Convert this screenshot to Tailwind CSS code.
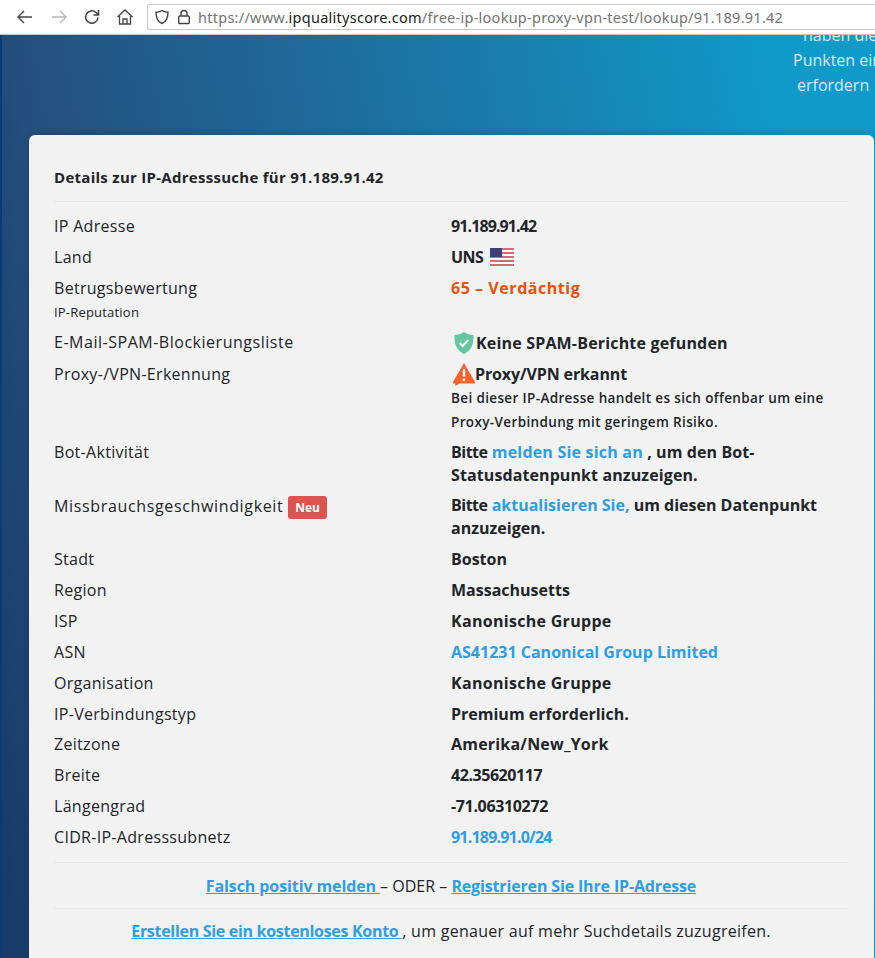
<!DOCTYPE html>
<html lang="en">
<head>
  <meta charset="UTF-8">
  <title>IP Lookup</title>
  <script src="https://cdn.jsdelivr.net/npm/@tailwindcss/browser@4"></script>
</head>
<body class="h-[958px] w-[875px] overflow-hidden bg-[#0c3a74] font-['Open_Sans',sans-serif] text-[16px] leading-6 text-[#212529]">

  <!-- Browser toolbar -->
  <div class="flex h-[35px] items-center border-b border-[#c8c8c8] bg-white">
    <svg class="ml-[16px] h-[18px] w-[18px]" viewBox="0 0 18 18" fill="none" stroke="#444" stroke-width="1.4"><path d="M16 9H2M8 3L2 9l6 6"/></svg>
    <svg class="ml-[16px] h-[18px] w-[18px]" viewBox="0 0 18 18" fill="none" stroke="#b5b5b5" stroke-width="1.4"><path d="M2 9h14M10 3l6 6-6 6"/></svg>
    <svg class="ml-[15px] h-[18px] w-[18px]" viewBox="0 0 18 18" fill="none" stroke="#444" stroke-width="1.5"><path d="M15 9.500A6.200 6.200 0 1 1 13 4.500L15 6.500M15.500 2v5h-5"/></svg>
    <svg class="ml-[15px] h-[18px] w-[18px]" viewBox="0 0 18 18" fill="none" stroke="#444" stroke-width="1.3"><path d="M1.500 9L9 2l7.500 7M3.500 8v8h11V8M7 16v-5h4v5"/></svg>
    <div class="ml-[13px] flex h-[26px] flex-1 items-center rounded-l-[3px] border border-r-0 border-[#c8c8c8] font-['Noto_Sans',sans-serif] text-[14.5px] tracking-[0.26px] text-[#737373]">
      <svg class="ml-[6px] h-[16px] w-[16px]" viewBox="0 0 16 16" fill="none" stroke="#444" stroke-width="1.4"><path d="M8 1.500c2 1.300 4 1.800 6 1.800 0 5-1 9.200-6 11.200-5-2-6-6.200-6-11.200 2 0 4-.5 6-1.800z"/></svg>
      <svg class="ml-[6px] h-[16px] w-[16px]" viewBox="0 0 16 16" fill="none" stroke="#444" stroke-width="1.4"><rect x="2.700" y="7" width="10.600" height="7.500" rx="1"/><path d="M5 7V4.500a3 3 0 0 1 6 0V7"/></svg>
      <span class="ml-[6px] whitespace-nowrap">https://www.<span class="text-[#1a1a1a]">ipqualityscore.com</span>/free-ip-lookup-proxy-vpn-test/lookup/91.189.91.42</span>
    </div>
  </div>

  <!-- Hero -->
  <div class="ml-[2px] h-[923px] overflow-hidden bg-[linear-gradient(80deg,#173a68_0%,#24507f_18%,#1b78a8_58%,#0f9ac9_90%)]">
    <div class="flex h-[100px] flex-col items-end text-[16px] leading-[25px] text-white/80">
      <p class="-mt-[12px] w-[72px] whitespace-nowrap">haben die</p>
      <p class="w-[82px] whitespace-nowrap">Punkten ein</p>
      <p class="w-[78px] whitespace-nowrap">erfordern</p>
    </div>

    <!-- Details card -->
    <div class="ml-[27px] mr-[1px] rounded-t-[6px] bg-[#f2f2f2] pb-[30px] pl-[25px] pr-[26px] pt-[30px] shadow-[0_-2px_6px_rgba(0,0,0,0.15)]">
      <h2 class="border-b border-[#e6e6e6] pb-[12px] text-[15px] font-bold leading-6 tracking-[0.28px]">Details zur IP-Adresssuche für 91.189.91.42</h2>

      <div class="grid grid-cols-[397px_1fr] pt-[9px] tracking-[0.3px]">
        <div class="py-[3.440px]">IP Adresse</div>
        <div class="py-[3.440px] font-bold tracking-[-0.9px]">91.189.91.42</div>

        <div class="py-[3.440px]">Land</div>
        <div class="flex items-center py-[3.440px] font-bold tracking-[-0.5px]">UNS
          <svg class="ml-[7px] h-[18px] w-[24px]" viewBox="0 0 24 18"><rect width="24" height="18" fill="#fff"/><path d="M0 1h24M0 5h24M0 9h24M0 13h24M0 17h24" stroke="#d0344a" stroke-width="1.500"/><rect width="12" height="9" fill="#3c3f78"/></svg>
        </div>

        <div class="pb-[2.500px] pt-[3.500px]">Betrugsbewertung<p class="text-[13px] leading-[24px] tracking-[0.2px]">IP-Reputation</p></div>
        <div class="py-[3.500px] font-bold tracking-[0.55px] text-[#e5510f]">65 – Verdächtig</div>

        <div class="py-[3.500px] tracking-[0.52px]">E-Mail-SPAM-Blockierungsliste</div>
        <div class="flex min-h-[32px] items-center py-[3.500px] font-bold tracking-[0.18px]">
          <svg class="ml-[3px] h-[22px] w-[20px]" viewBox="0 0 20 22"><path d="M10 0c3 2 6 3 9.500 3 0 8-1 15-9.500 19C1.500 18 .5 11 .5 3 4 3 7 2 10 0z" fill="#63c7a3"/><path d="M5.500 11l3.200 3 5.500-6" fill="none" stroke="#fff" stroke-width="2"/></svg>
          <span class="ml-[2px]">Keine SPAM-Berichte gefunden</span>
        </div>

        <div class="pb-[2.500px] pt-[3.500px]">Proxy-/VPN-Erkennung</div>
        <div class="pb-[2.500px] pt-[3.500px] font-bold">
          <div class="flex h-[24px] items-center">
            <svg class="ml-[1px] h-[24px] w-[24px]" viewBox="0 0 24 24"><path d="M12 1L23 20c.5 1 0 1.500-1 1.500H8L3 24l.5-2.500H2c-1 0-1.500-.5-1-1.500z" fill="#f9622c"/><path d="M12 7v7.500M12 16.500v2.500" stroke="#fff" stroke-width="2.400"/></svg>
            <span class="-ml-[1px] tracking-[-0.12px]">Proxy/VPN erkannt</span>
          </div>
          <p class="text-[13.500px] font-semibold leading-[24px] tracking-[0.36px]">Bei dieser IP-Adresse handelt es sich offenbar um eine Proxy-Verbindung mit geringem Risiko.</p>
        </div>

        <div class="py-[3.500px]">Bot-Aktivität</div>
        <div class="pb-[2.500px] pt-[4.500px] font-bold leading-[23px] tracking-[0.1px]"><span class="tracking-[-0.5px]">Bitte</span> <a class="tracking-[0.2px] text-[#2f9ee0]">melden Sie sich an</a> , um den Bot-Statusdatenpunkt anzuzeigen.</div>

        <div class="pb-[3.500px] pt-[4.500px] tracking-[0.65px]">Missbrauchsgeschwindigkeit <span class="rounded-[3px] bg-[#dc5350] px-[7px] py-[3px] text-[12px] font-bold tracking-normal text-white">Neu</span></div>
        <div class="pb-[3.500px] pt-[4.500px] font-bold leading-[23px] tracking-normal"><span class="tracking-[-0.5px]">Bitte</span> <a class="text-[#2f9ee0]">aktualisieren Sie,</a> um diesen Datenpunkt anzuzeigen.</div>

        <div class="py-[3.440px]">Stadt</div>
        <div class="py-[3.440px] font-bold tracking-normal">Boston</div>

        <div class="py-[3.440px]">Region</div>
        <div class="py-[3.440px] font-bold tracking-normal">Massachusetts</div>

        <div class="py-[3.440px]">ISP</div>
        <div class="py-[3.440px] font-bold">Kanonische Gruppe</div>

        <div class="py-[3.440px]">ASN</div>
        <div class="py-[3.440px] font-bold tracking-normal text-[#2f9ee0]">AS41231 Canonical Group Limited</div>

        <div class="py-[3.440px]">Organisation</div>
        <div class="py-[3.440px] font-bold">Kanonische Gruppe</div>

        <div class="py-[3.440px]">IP-Verbindungstyp</div>
        <div class="py-[3.440px] font-bold tracking-normal">Premium erforderlich.</div>

        <div class="py-[3.440px]">Zeitzone</div>
        <div class="py-[3.440px] font-bold tracking-[0.2px]">Amerika/New_York</div>

        <div class="py-[3.440px]">Breite</div>
        <div class="py-[3.440px] font-bold tracking-[-0.45px]">42.35620117</div>

        <div class="py-[3.440px]">Längengrad</div>
        <div class="py-[3.440px] font-bold tracking-[-0.35px]">-71.06310272</div>

        <div class="py-[3.440px]">CIDR-IP-Adresssubnetz</div>
        <div class="py-[3.440px] font-bold tracking-[-0.8px] text-[#2f9ee0]">91.189.91.0/24</div>
      </div>

      <div class="mt-[9px] border-t border-[#e6e6e6] pb-[10px] pt-[11px] text-center">
        <a class="font-bold tracking-[-0.1px] text-[#2f9ee0] underline">Falsch positiv melden </a> – ODER – <a class="font-bold tracking-[-0.15px] text-[#2f9ee0] underline">Registrieren Sie Ihre IP-Adresse</a>
      </div>
      <div class="border-t border-[#e6e6e6] py-[10.500px] text-center">
        <a class="font-bold tracking-[-0.3px] text-[#2f9ee0] underline">Erstellen Sie ein kostenloses Konto </a><span class="tracking-[0.27px]">, um genauer auf mehr Suchdetails zuzugreifen.</span>
      </div>
    </div>
  </div>
</body>
</html>
